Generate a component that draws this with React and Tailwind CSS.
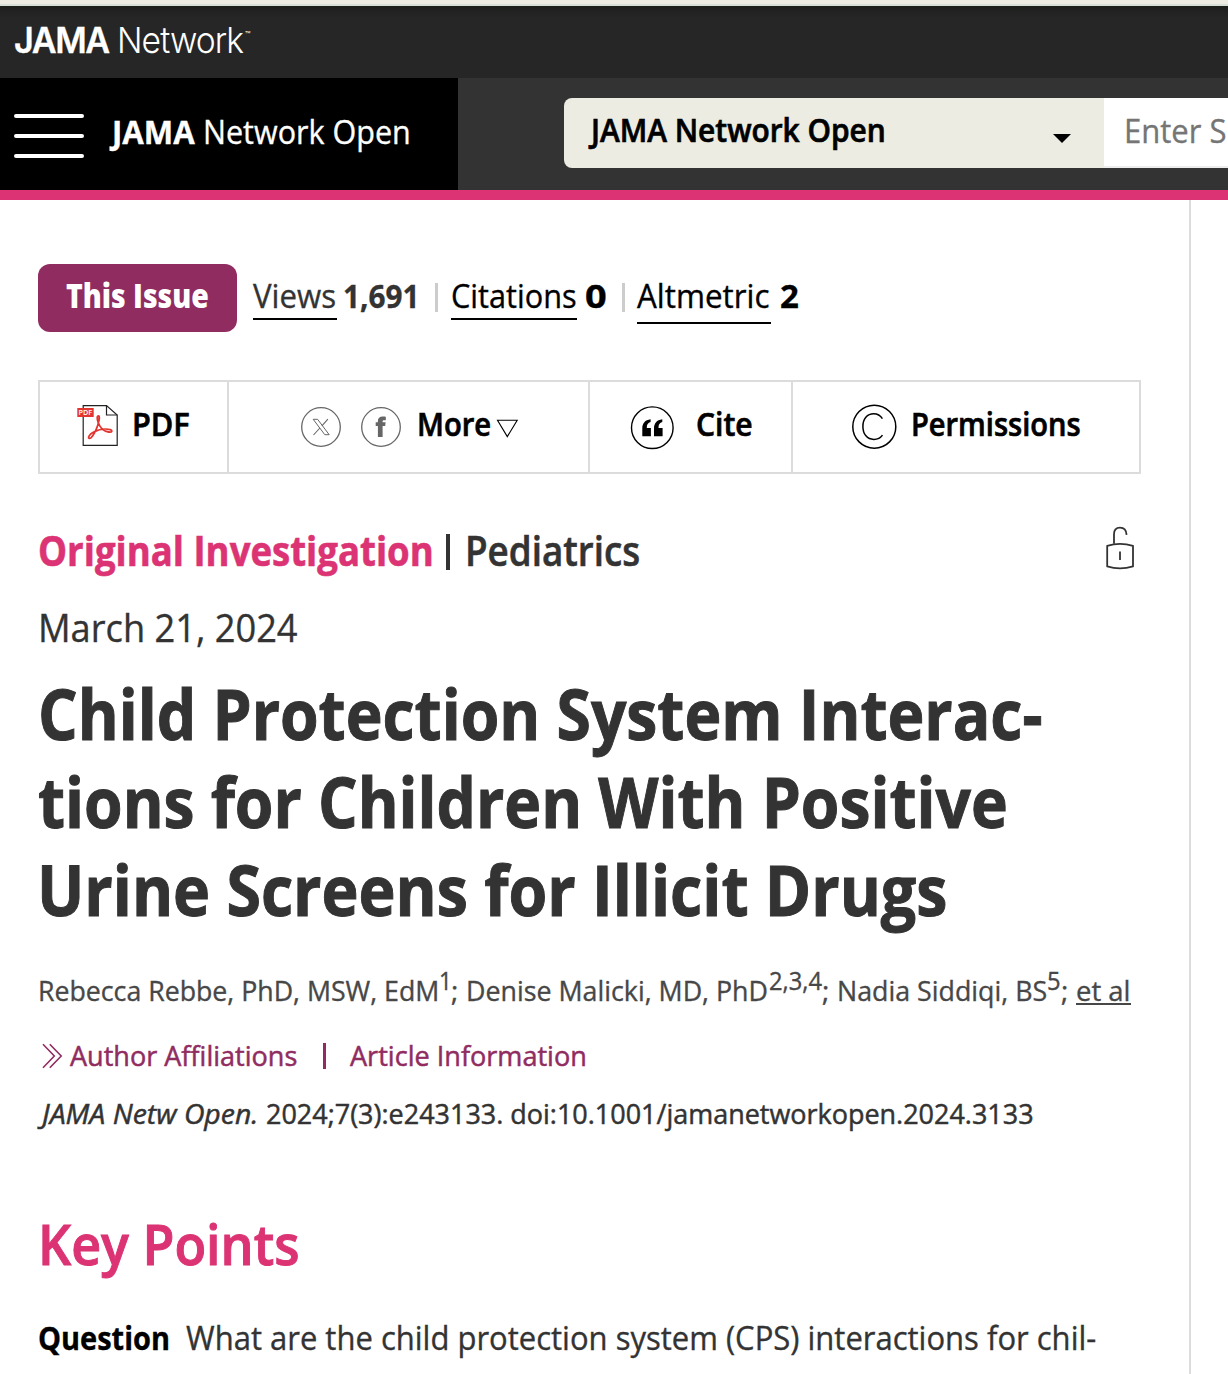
import React from "react";

// Condensed text: `box` sets the space taken in the row, `fit` narrows the letters.
function Text({ box = "", fit = "", children }) {
  return (
    <span className={`block shrink-0 whitespace-nowrap ${box}`}>
      <span className={`block w-max origin-left ${fit}`}>{children}</span>
    </span>
  );
}

function PdfIcon() {
  return (
    <svg className="mt-[22px] ml-9 h-[43px] w-[43px] shrink-0 [-webkit-text-stroke:0]" viewBox="0 0 43 43" fill="none">
      <path d="M7.2 1.6H30.5L41.2 11V41.4H7.2Z" stroke="#222" strokeWidth="1.2" />
      <path d="M30.5 1.6V11H41.2" stroke="#222" strokeWidth="1.2" />
      <path
        d="M22.6 12c-1.9 0-1.5 3.2-.5 6.2 1.6 4.9 5.6 8.9 10.6 9.8 3.6.6 4-1.6 1.5-2.4-5-1.4-12.3.2-16.9 2.7-4.2 2.3-5.4 5.2-4.2 6 1.6 1 4.6-3.6 7.1-9 2.2-4.8 4.2-13.3 2.4-13.3Z"
        stroke="#e2352f"
        strokeWidth="1.8"
      />
      <rect x="1.3" y="4" width="16.4" height="9" fill="#e2352f" />
      <text x="2.6" y="11.1" fontSize="7.4" fontWeight="600" fontFamily="Open Sans" fill="#fff" textLength="13.6" lengthAdjust="spacingAndGlyphs">PDF</text>
    </svg>
  );
}

function XIcon() {
  return (
    <svg className="mt-[25px] ml-[72px] h-10 w-10 shrink-0" viewBox="0 0 40 40" fill="none">
      <circle cx="20" cy="20" r="19.3" stroke="#666" strokeWidth="1.3" />
      <path d="M12.2 12.3H16.6L28.2 27.7H23.8Z" stroke="#666" strokeWidth="1" />
      <path d="M26.9 12.2L20.9 18.8M18.9 21L12.5 28" stroke="#666" strokeWidth="1.1" />
    </svg>
  );
}

function FacebookIcon() {
  return (
    <svg className="mt-[25px] ml-5 h-10 w-10 shrink-0" viewBox="0 0 40 40" fill="none">
      <circle cx="20" cy="20" r="19.3" stroke="#666" strokeWidth="1.3" />
      <path d="M16.9 30V18.9H14.7V15.3H16.9V14C16.9 11 18.6 9.4 21.8 9.4C23.1 9.4 24.3 9.5 24.8 9.7V13.2H23.2C22 13.2 21.6 13.6 21.6 14.6V15.3H24.6L24.2 18.9H21.6V30Z" fill="#666" />
    </svg>
  );
}

function QuoteIcon() {
  return (
    <svg className="mt-[24px] ml-10 h-11 w-11 shrink-0" viewBox="0 0 44 44" fill="none">
      <circle cx="22.3" cy="21.7" r="20.8" stroke="#000" strokeWidth="1.4" />
      <path d="M12.3 30.3V22.5C12.3 17.2 15 14 20.6 13.3V16.1C18 16.8 16.7 18.6 16.8 21.9H20.9V30.3Z" fill="#000" />
      <path d="M24 30.3V22.5C24 17.2 26.7 14 32.3 13.3V16.1C29.7 16.8 28.4 18.6 28.5 21.9H32.6V30.3Z" fill="#000" />
    </svg>
  );
}

function CopyrightIcon() {
  return (
    <svg className="mt-[22px] ml-[59px] h-[46px] w-[46px] shrink-0" viewBox="0 0 46 46" fill="none">
      <circle cx="22.3" cy="22.7" r="21.5" stroke="#000" strokeWidth="1.5" />
      <path d="M30.4 14.7C28.3 11.4 25.5 9.8 21.7 9.8C15.2 9.8 10.9 14.8 10.9 22.4C10.9 30.2 15.3 35.4 21.8 35.4C25.6 35.4 28.5 33.9 30.5 31.1" stroke="#000" strokeWidth="1.5" />
    </svg>
  );
}

function LockIcon() {
  return (
    <svg className="mt-1.5 mr-px h-11 w-[30px] shrink-0" viewBox="0 0 30 44" fill="none" stroke="#333" strokeWidth="1.8">
      <path d="M9 17.8V8.3C9 4 11.5 1.7 15 1.7C18.5 1.7 21.3 4 21.6 8.9" />
      <path d="M2.2 19.8C10 17.4 20 17.4 28 19.8V40.4C20 42.7 10 42.7 2.2 40.4Z" strokeLinejoin="round" />
      <path d="M15 25.6V34" />
    </svg>
  );
}

export default function App() {
  return (
    <div className="h-[1374px] w-[1228px] overflow-hidden bg-white font-['Open_Sans',sans-serif] text-[33px] text-black [-webkit-text-stroke:0.35px]">
      <div className="h-1 bg-[#ecece2]" />
      <div className="h-0.5 bg-[#d8dfd9]" />

      <header>
        <div className="flex h-[72px] bg-[#262626] bg-linear-to-b from-[#1c1e1c] to-[#262626] to-[12px] pl-3.5 font-['Inter',sans-serif] text-[36px] leading-[69px] text-white [-webkit-text-stroke:0]">
          <Text box="w-[103px]" fit="font-semibold tracking-[-1.5px] scale-x-[0.95] [-webkit-text-stroke:0.3px]">JAMA</Text>
          <Text box="w-[128px]" fit="font-light tracking-[-1px] scale-x-[0.935]">Network</Text>
          <span className="text-[9px] leading-[57px] font-normal">™</span>
        </div>

        <div className="flex h-[112px] bg-[#333]">
          <div className="flex w-[458px] bg-black pl-3.5 text-white">
            <div className="mt-9 flex w-[70px] flex-col gap-4">
              <span className="h-1 rounded-full bg-white" />
              <span className="h-1 rounded-full bg-white" />
              <span className="h-1 rounded-full bg-white" />
            </div>
            <div className="ml-[28px] flex leading-[108px]">
              <Text box="w-[91px]" fit="font-bold scale-x-[0.945]">JAMA</Text>
              <Text fit="scale-x-[0.925]">Network Open</Text>
            </div>
          </div>

          <div className="mt-5 ml-[106px] flex h-[70px] w-[540px] rounded-l-lg bg-[#ecece2] pl-[27px] leading-[64px]">
            <Text box="w-[462px]" fit="font-semibold scale-x-[0.905] [-webkit-text-stroke:0.7px]">JAMA Network Open</Text>
            <svg className="mt-9 h-[9px] w-[18px]" viewBox="0 0 18 9">
              <path d="M0 0H18L9 9Z" fill="#000" />
            </svg>
          </div>
          <div className="mt-5 h-[70px] w-[124px] overflow-hidden border-b-2 border-[#eee] bg-white pl-5 leading-[66px] text-[#757575]">
            <Text fit="scale-x-[0.94]">Enter S</Text>
          </div>
        </div>
        <div className="h-2.5 bg-[#db3373]" />
      </header>

      <main className="h-[1174px] w-[1191px] border-r-2 border-[#dcdcdc] pt-16 pl-[38px] text-[#333]">
        <div className="flex h-[68px] items-start leading-[64px]">
          <button className="flex h-[68px] w-[199px] items-start rounded-xl bg-[#912c61] pl-7 text-left leading-[64px] text-white">
            <Text fit="font-extrabold scale-x-[0.86] [-webkit-text-stroke:0]">This Issue</Text>
          </button>
          <Text box="ml-4 h-14 w-[84px] border-b-2 border-black" fit="scale-x-[0.945]">Views</Text>
          <Text box="ml-1.5 w-[92px]" fit="font-bold scale-x-[0.9]">1,691</Text>
          <span className="mt-[19px] h-[29px] w-[3px] bg-[#ccc]" />
          <Text box="ml-[13px] h-14 w-[126px] border-b-2 border-black text-black" fit="scale-x-[0.93]">Citations</Text>
          <Text box="ml-[8px] w-[37px] text-black" fit="font-bold scale-x-[1.15]">0</Text>
          <span className="mt-[19px] h-[29px] w-[3px] bg-[#ccc]" />
          <Text box="ml-3 h-[60px] w-[134px] border-b-2 border-black text-black" fit="scale-x-[0.95]">Altmetric</Text>
          <Text box="ml-[9px] text-black" fit="font-bold">2</Text>
        </div>

        <div className="mt-12 flex h-[94px] w-[1103px] border-2 border-[#dcdcdc] leading-[84px] font-semibold text-black [-webkit-text-stroke:0.7px]">
          <div className="flex w-[189px] border-r-2 border-[#dcdcdc]">
            <PdfIcon />
            <Text box="ml-[13px]" fit="scale-x-[0.93]">PDF</Text>
          </div>
          <div className="flex w-[361px] border-r-2 border-[#dcdcdc]">
            <XIcon />
            <FacebookIcon />
            <Text box="ml-4 w-[79px]" fit="scale-x-[0.885]">More</Text>
            <svg className="mt-[37px] h-[19px] w-[23px]" viewBox="0 0 23 19" fill="none">
              <path d="M1.5 1.2H21.2L11.3 17.6Z" stroke="#000" strokeWidth="1.1" />
            </svg>
          </div>
          <div className="flex w-[203px] border-r-2 border-[#dcdcdc]">
            <QuoteIcon />
            <Text box="ml-[22px]" fit="scale-x-[0.91]">Cite</Text>
          </div>
          <div className="flex">
            <CopyrightIcon />
            <Text box="ml-[13px]" fit="scale-x-[0.88]">Permissions</Text>
          </div>
        </div>

        <div className="mt-[46px] flex h-16 w-[1098px] text-[41px] leading-[61px] [-webkit-text-stroke:0.6px]">
          <Text box="w-[408px] text-[#db3373]" fit="font-bold scale-x-[0.892]">Original Investigation</Text>
          <span className="mt-[14px] h-9 w-1 bg-[#333]" />
          <Text box="ml-[15px] grow" fit="font-semibold scale-x-[0.897]">Pediatrics</Text>
          <LockIcon />
        </div>

        <div className="h-[85px] text-[38.5px] leading-[87px]">
          <Text fit="scale-x-[0.941]">March 21, 2024</Text>
        </div>

        <h1 className="text-[69px] leading-[88px] font-bold [-webkit-text-stroke:1px]">
          <Text fit="scale-x-[0.904]">Child Protection System Interac-</Text>
          <Text fit="scale-x-[0.903]">tions for Children With Positive</Text>
          <Text fit="-ml-px scale-x-[0.908]">Urine Screens for Illicit Drugs</Text>
        </h1>

        <div className="mt-[37px] flex text-[28px] leading-[41px] text-[#474747]">
          <Text box="w-[401px]" fit="scale-x-[0.954]">Rebecca Rebbe, PhD, MSW, EdM</Text>
          <Text box="-mt-2.5 w-[12px] text-[25px]" fit="scale-x-[0.9]">1</Text>
          <Text box="w-[15px]">;</Text>
          <Text box="w-[303px]" fit="scale-x-[0.957]">Denise Malicki, MD, PhD</Text>
          <Text box="-mt-2.5 w-[53px] text-[25px]" fit="scale-x-[0.95]">2,3,4</Text>
          <Text box="w-[15px]">;</Text>
          <Text box="w-[210px]" fit="scale-x-[0.957]">Nadia Siddiqi, BS</Text>
          <Text box="-mt-2.5 w-[14px] text-[25px]" fit="scale-x-[0.95]">5</Text>
          <Text box="w-[15px]">;</Text>
          <Text box="h-[35px] w-[55px] border-b-2 border-[#474747]" fit="scale-x-[0.98]">et al</Text>
        </div>

        <div className="mt-[24px] flex h-10 text-[28px] leading-10 text-[#912c61]">
          <svg className="mt-[8px] ml-1 mr-1.5 h-[26px] w-[22px]" viewBox="0 0 22 26" fill="none" stroke="#912c61" strokeWidth="1.6">
            <path d="M1 1.2L12.3 13L1 24.8M7.8 1.2L19.2 13L7.8 24.8" />
          </svg>
          <Text box="w-[253px]" fit="scale-x-[0.966] [-webkit-text-stroke:0.5px]">Author Affiliations</Text>
          <span className="mt-[8px] mr-6 h-[26px] w-[3px] bg-[#912c61]" />
          <Text fit="scale-x-[0.967] [-webkit-text-stroke:0.5px]">Article Information</Text>
        </div>

        <div className="mt-[18px] flex h-10 text-[28px] leading-10 [-webkit-text-stroke:0.5px]">
          <Text box="ml-1 w-[224px]" fit="italic scale-x-[1.015]">JAMA Netw Open.</Text>
          <Text fit="scale-x-[0.963]">2024;7(3):e243133. doi:10.1001/jamanetworkopen.2024.3133</Text>
        </div>

        <h2 className="mt-[71px] text-[56.5px] leading-[80px] font-semibold text-[#db3373] [-webkit-text-stroke:1px]">
          <Text fit="scale-x-[0.92]">Key Points</Text>
        </h2>

        <div className="mt-[29px] flex text-[32px] leading-[50px]">
          <Text box="w-[148px] text-black" fit="font-bold scale-x-[0.905]">Question</Text>
          <Text fit="scale-x-[0.969]">What are the child protection system (CPS) interactions for chil-</Text>
        </div>
      </main>
    </div>
  );
}
